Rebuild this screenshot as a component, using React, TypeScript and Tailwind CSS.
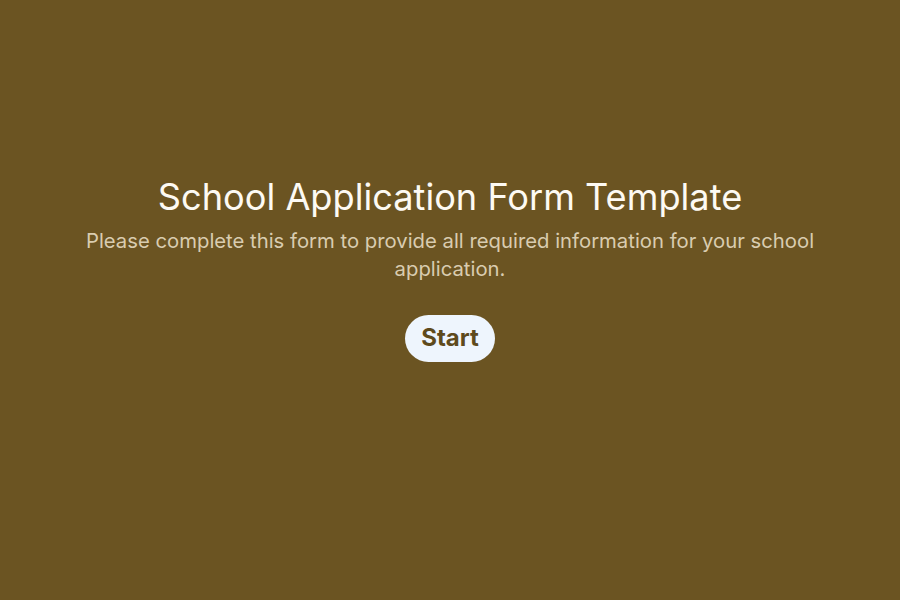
export default function App() {
  return (
    <div
      className="w-full h-[600px] bg-[#6b5422] flex flex-col items-center justify-center px-8 pb-[62px]"
      style={{ fontFamily: "Inter, 'Noto Sans', sans-serif" }}
    >
      <h1 className="text-[36.2px] leading-[40px] text-[#fdfaf3] font-normal text-center">
        School Application Form Template
      </h1>
      <p className="mt-[10px] text-[20.3px] leading-[28px] text-[#d9ccb0] text-center max-w-[770px]">
        Please complete this form to provide all required information for your school application.
      </p>
      <button className="mt-[32px] h-[47px] px-[16px] rounded-full bg-[#eef5fd] text-[#5e4a1c] text-[24px] font-bold">
        Start
      </button>
    </div>
  );
}
